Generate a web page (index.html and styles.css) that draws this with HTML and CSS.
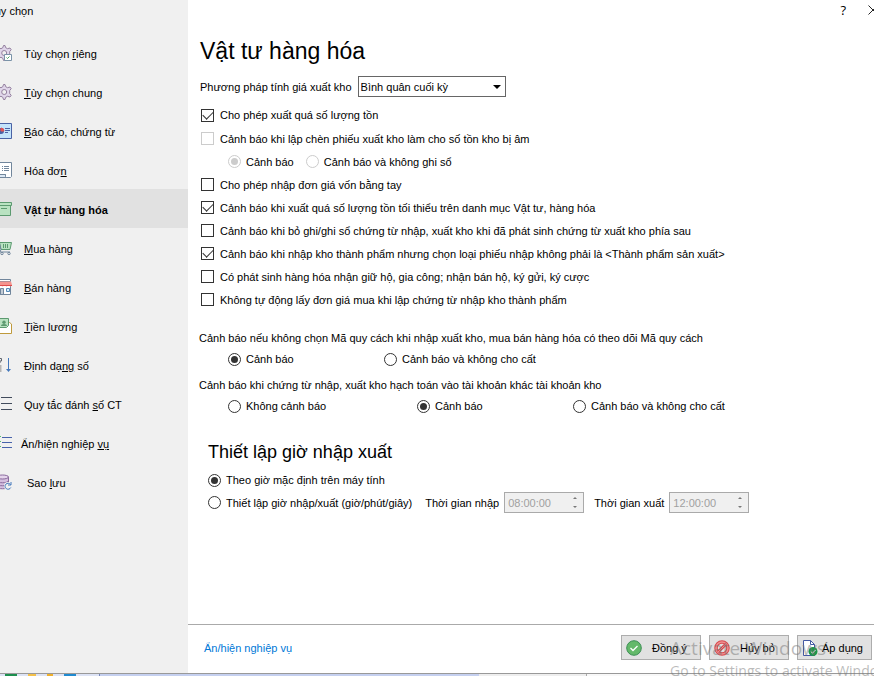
FILE: index.html
```html
<!DOCTYPE html>
<html lang="vi">
<head>
    <meta charset="UTF-8">
    <meta name="viewport" content="width=device-width, initial-scale=1.0">
    <title>Tùy chọn</title>
    <link rel="stylesheet" href="styles.css">
</head>
<body>
    <div class="dialog">
        <nav class="sidebar">
            <div class="title">Tùy chọn</div>
            <ul class="menu">
                <li><a href="#">
                    <svg width="16" height="16" viewBox="0 0 16 16" fill="none">
                        <path d="M7.500.5h1.500l.7 2.200 1.800 1L14 3l1.200 1.700L13.700 6.500v3l1.500 1.800L14 13l-2.500-.7-1.800 1-.7 2.200H7.500l-.7-2.200-1.800-1-2.500.7-1.200-1.700 1.500-1.800v-3L1.300 4.700 2.500 3 5 3.700l1.800-1z" fill="#e0d6ea" stroke="#94809f"/>
                        <circle cx="8.200" cy="8" r="2.500" fill="#f0f0f0" stroke="#94809f"/>
                        <path d="M8.500 9.500h7v6h-7z" fill="#fff" stroke="#7a93a8"/>
                        <path d="M10.500 12.500l1 1 2-2" stroke="#4aa564"/>
                    </svg>
                    <span>Tùy chọn <u>r</u>iêng</span></a></li>
                <li><a href="#">
                    <svg width="16" height="16" viewBox="0 0 16 16" fill="none">
                        <path d="M7.500.5h1.500l.7 2.200 1.800 1L14 3l1.200 1.700L13.700 6.500v3l1.500 1.800L14 13l-2.500-.7-1.800 1-.7 2.200H7.500l-.7-2.200-1.800-1-2.500.7-1.200-1.700 1.500-1.800v-3L1.300 4.700 2.500 3 5 3.700l1.800-1z" fill="#e0d6ea" stroke="#94809f"/>
                        <circle cx="8.200" cy="8" r="2.500" fill="#f0f0f0" stroke="#94809f"/>
                    </svg>
                    <span><u>T</u>ùy chọn chung</span></a></li>
                <li><a href="#">
                    <svg width="16" height="16" viewBox="0 0 16 16" fill="none">
                        <path d="M.5.5h15v15H.5z" fill="#c4e4fb" stroke="#4a62a5"/>
                        <circle cx="5" cy="8" r="3" fill="#4a62a5"/>
                        <path d="M5 8V5a3 3 0 0 1 3 3z" fill="#e05555" stroke="#e05555"/>
                        <path d="M9 5.500h5M9 7.500h5M9 9.500h3" stroke="#4a62a5"/>
                    </svg>
                    <span><u>B</u>áo cáo, chứng từ</span></a></li>
                <li><a href="#">
                    <svg width="16" height="16" viewBox="0 0 16 16" fill="none">
                        <path d="M3.500.5h12v14l-1 1h-4l-1-1v-2h-6z" fill="#fff" stroke="#71869c"/>
                        <path d="M.5 12.500h9v2l1 1H2l-1.500-1z" fill="#dce8f4" stroke="#71869c"/>
                        <path d="M6 4.500h1M8 4.500h5M6 6.500h1M8 6.500h5M6 8.500h1M8 8.500h5" stroke="#71869c"/>
                    </svg>
                    <span>Hóa đơ<u>n</u></span></a></li>
                <li><a href="#" class="active">
                    <svg width="16" height="16" viewBox="0 0 16 16" fill="none">
                        <path d="M1.500 4.500h13v10h-13zM.5 1.500h15v3H.5z" fill="#b9e2c1" stroke="#5c9a70"/>
                        <path d="M5 7.500h6" stroke="#5c9a70"/>
                    </svg>
                    <span>Vật <u>t</u>ư hàng hóa</span></a></li>
                <li><a href="#">
                    <svg width="16" height="16" viewBox="0 0 16 16" fill="none">
                        <path d="M3.500 2.500h12l-1.500 7H5z" fill="#b9e2c1" stroke="#5c9a70"/>
                        <path d="M7.500 4v4M9.500 4v4M11.500 4v4" stroke="#5c9a70"/>
                        <path d="M0 1.500h3l2 8-1 2.500h10" stroke="#71869c"/>
                        <circle cx="6" cy="13.500" r="1.200" stroke="#71869c"/>
                        <circle cx="13" cy="13.500" r="1.200" stroke="#71869c"/>
                    </svg>
                    <span><u>M</u>ua hàng</span></a></li>
                <li><a href="#">
                    <svg width="16" height="16" viewBox="0 0 16 16" fill="none">
                        <path d="M1.500 6.500h13v9h-13zM3.500.5h11v2h-11z" fill="#fff" stroke="#71869c"/>
                        <path d="M1 2.500h14l1 3.500-1.500 1.500-2-1-2 1-2-1-2 1-2-1-2 1L0 6z" fill="#f4948f"/>
                        <path d="M0 6.500h16" stroke="#df4b4b"/>
                        <path d="M4.500 9.500h3v6h-3z" fill="#c3ccd6" stroke="#71869c"/>
                        <path d="M10.500 9.500h3v3h-3z" fill="#d8effb" stroke="#5589b8"/>
                    </svg>
                    <span><u>B</u>án hàng</span></a></li>
                <li><a href="#">
                    <svg width="16" height="16" viewBox="0 0 16 16" fill="none">
                        <path d="M.5 4.500h13l2 1.500v9.500H.5z" fill="#fff" stroke="#bf9a3c"/>
                        <path d="M2.500.5h10v7l-2 2h-8z" fill="#b9e2c1" stroke="#5c9a70"/>
                        <circle cx="8" cy="4.200" r="1.700" fill="#5c9a70"/>
                        <path d="M5 8a3 2 0 0 1 6 0z" fill="#5c9a70"/>
                    </svg>
                    <span><u>T</u>iền lương</span></a></li>
                <li><a href="#">
                    <svg width="16" height="16" viewBox="0 0 16 16" fill="none">
                        <path d="M3 1.500h2.500v2.500H4v2" stroke="#5f656e"/>
                        <path d="M4.500 8v7" stroke="#b5b5b5" stroke-width="2"/>
                        <path d="M12.500 1v13" stroke="#4478bc"/>
                        <path d="M10 12h5l-2.500 3z" fill="#4478bc"/>
                    </svg>
                    <span>Định dạ<u>ng</u> số</span></a></li>
                <li><a href="#">
                    <svg width="16" height="16" viewBox="0 0 16 16" fill="none">
                        <path d="M5 1.500h11M5 7.500h11M5 13.500h11" stroke="#414b5c"/>
                    </svg>
                    <span>Quy tắc đánh <u>s</u>ố CT</span></a></li>
                <li><a href="#" class="wide">
                    <svg width="16" height="16" viewBox="0 0 16 16" fill="none">
                        <path d="M6 2.500h10M6 7.500h10M6 12.500h10" stroke="#4863ab"/>
                        <path d="M1 2l1.500 1.500L5 1M1 7l1.500 1.500L5 6M1 12l1.500 1.500L5 11" stroke="#57c06e"/>
                    </svg>
                    <span>Ẩn/hiện nghiệp <u>vụ</u></span></a></li>
                <li><a href="#" class="narrow">
                    <svg width="16" height="16" viewBox="0 0 16 16" fill="none">
                        <path d="M.5 3v9.500c0 3 12 3 12 0V3z" fill="#d4bedf" stroke="#8a6a9d"/>
                        <ellipse cx="6.500" cy="3" rx="6" ry="2" fill="#e5d5ec" stroke="#8a6a9d"/>
                        <path d="M.5 6.500c0 3 12 3 12 0M.5 9.500c0 3 12 3 12 0" stroke="#8a6a9d"/>
                        <circle cx="12" cy="12" r="4" fill="#f0f0f0"/>
                        <path d="M14.500 10.500a3 3 0 1 0 .3 3M15 8v3h-3" stroke="#4478bc"/>
                    </svg>
                    <span>Sao <u>l</u>ưu</span></a></li>
            </ul>
        </nav>

        <main class="content">
            <div class="window-buttons">
                <button type="button" aria-label="Help">?</button>
                <button type="button" aria-label="Close">
                    <svg width="10" height="10" viewBox="0 0 10 10"><path d="M.5.5l9 9M9.500.5l-9 9" stroke="#222"/></svg>
                </button>
            </div>

            <form class="options">
                <h1>Vật tư hàng hóa</h1>
                <div class="method">
                    <label for="method">Phương pháp tính giá xuất kho</label>
                    <div class="select">
                        <select id="method">
                            <option>Bình quân cuối kỳ</option>
                        </select>
                    </div>
                </div>

                <div class="checks">
                    <label><input type="checkbox" checked>Cho phép xuất quá số lượng tồn</label>
                    <label><input type="checkbox" disabled>Cảnh báo khi lập chèn phiếu xuất kho làm cho số tồn kho bị âm</label>
                    <div class="sub">
                        <label><input type="radio" name="negative" checked disabled>Cảnh báo</label>
                        <label><input type="radio" name="negative" disabled>Cảnh báo và không ghi sổ</label>
                    </div>
                    <label><input type="checkbox">Cho phép nhập đơn giá vốn bằng tay</label>
                    <label><input type="checkbox" checked>Cảnh báo khi xuất quá số lượng tồn tối thiểu trên danh mục Vật tư, hàng hóa</label>
                    <label><input type="checkbox">Cảnh báo khi bỏ ghi/ghi sổ chứng từ nhập, xuất kho khi đã phát sinh chứng từ xuất kho phía sau</label>
                    <label><input type="checkbox" checked>Cảnh báo khi nhập kho thành phẩm nhưng chọn loại phiếu nhập không phải là &lt;Thành phẩm sản xuất&gt;</label>
                    <label><input type="checkbox">Có phát sinh hàng hóa nhận giữ hộ, gia công; nhận bán hộ, ký gửi, ký cược</label>
                    <label><input type="checkbox">Không tự động lấy đơn giá mua khi lập chứng từ nhập kho thành phẩm</label>
                </div>

                <fieldset class="group">
                    <legend>Cảnh báo nếu không chọn Mã quy cách khi nhập xuất kho, mua bán hàng hóa có theo dõi Mã quy cách</legend>
                    <div class="choices two">
                        <label><input type="radio" name="spec" checked>Cảnh báo</label>
                        <label><input type="radio" name="spec">Cảnh báo và không cho cất</label>
                    </div>
                </fieldset>
                <fieldset class="group">
                    <legend>Cảnh báo khi chứng từ nhập, xuất kho hạch toán vào tài khoản khác tài khoản kho</legend>
                    <div class="choices three">
                        <label><input type="radio" name="account">Không cảnh báo</label>
                        <label><input type="radio" name="account" checked>Cảnh báo</label>
                        <label><input type="radio" name="account">Cảnh báo và không cho cất</label>
                    </div>
                </fieldset>

                <section class="time">
                    <h2>Thiết lập giờ nhập xuất</h2>
                    <label><input type="radio" name="time" checked>Theo giờ mặc định trên máy tính</label>
                    <div class="time-row">
                        <label><input type="radio" name="time">Thiết lập giờ nhập/xuất (giờ/phút/giây)</label>
                        <label for="timeIn">Thời gian nhập</label>
                        <div class="spin"><input type="text" id="timeIn" value="08:00:00" disabled></div>
                        <label for="timeOut">Thời gian xuất</label>
                        <div class="spin"><input type="text" id="timeOut" value="12:00:00" disabled></div>
                    </div>
                </section>
            </form>

            <footer class="footer">
                <a href="#">Ẩn/hiện nghiệp vụ</a>
                <div class="actions">
                    <button type="button">
                        <svg width="16" height="16" viewBox="0 0 16 16" fill="none">
                            <circle cx="8" cy="8" r="7.300" fill="#64b96a" stroke="#3c8f55"/>
                            <path d="M4.500 8l2.500 2.500 4.500-4.500" stroke="#fff" stroke-width="1.300"/>
                        </svg>
                        <span>Đồng ý</span>
                    </button>
                    <button type="button">
                        <svg width="16" height="16" viewBox="0 0 16 16" fill="none">
                            <circle cx="8" cy="8" r="6" stroke="#d9484c" stroke-width="3.500"/>
                            <circle cx="8" cy="8" r="6" stroke="#ee8f90" stroke-width="1.500"/>
                            <path d="M4 12l8-8" stroke="#d9484c" stroke-width="3"/>
                            <path d="M4 12l8-8" stroke="#ee8f90"/>
                        </svg>
                        <span>Hủy bỏ</span>
                    </button>
                    <button type="button">
                        <svg width="16" height="16" viewBox="0 0 16 16" fill="none">
                            <path d="M1.500.5h7l4 4v11h-11z" fill="#fff" stroke="#4459a3"/>
                            <path d="M8.500.5v4h4" stroke="#4459a3"/>
                            <circle cx="11" cy="11.500" r="4.500" fill="#1d9447"/>
                            <path d="M8.800 11.500l1.700 1.700 3-3.200" stroke="#fff"/>
                        </svg>
                        <span>Áp dụng</span>
                    </button>
                </div>
            </footer>
        </main>
    </div>
    <div class="taskbar"><i></i><i></i><i></i><i></i></div>
    <div class="watermark">
        <div class="watermark-title">Activate Windows</div>
        <div>Go to Settings to activate Windows.</div>
    </div>
</body>
</html>
```
FILE: styles.css
```css
* {
    box-sizing: border-box;
}
body {
    margin: 0;
    height: 100vh;
    display: flex;
    flex-direction: column;
    overflow: hidden;
    position: relative;
    font-family: "Liberation Sans", Arial, sans-serif;
    font-size: 11px;
    line-height: 16px;
    color: #000;
    background: #fff;
}
.dialog {
    flex: 1;
    display: flex;
    min-height: 0;
    border-bottom: 1px solid #999;
}

/* left menu */
.sidebar {
    width: 188px;
    flex: none;
    overflow: hidden;
    background: #f0f0f0;
}
.title {
    height: 33px;
    padding-top: 3px;
    margin-left: -12px;
}
.menu {
    list-style: none;
    margin: 0;
    padding: 0;
}
.menu a {
    display: flex;
    align-items: center;
    gap: 12px;
    height: 39px;
    margin-left: -4px;
    padding-top: 2px;
    color: #000;
    text-decoration: none;
    white-space: nowrap;
}
.menu a.active {
    background: #e1e1e1;
    font-weight: bold;
}
.menu a.wide {
    gap: 9px;
}
.menu a.narrow {
    gap: 15px;
}
.menu svg {
    margin-top: -2px;
}
svg {
    flex: none;
}

/* right side */
.content {
    flex: 1;
    min-width: 0;
    display: flex;
    flex-direction: column;
}
.window-buttons {
    display: flex;
    justify-content: flex-end;
    gap: 22px;
    height: 20px;
    margin-right: -4px;
}
.window-buttons button {
    padding: 0;
    border: none;
    background: none;
    font-family: "Open Sans", sans-serif;
    font-size: 13px;
}
.options {
    flex: 1;
    padding: 14px 12px 0;
    white-space: nowrap;
}
h1 {
    margin: 0 0 8px;
    font-size: 23px;
    font-weight: normal;
    line-height: 34px;
}
.method {
    display: flex;
    align-items: center;
    gap: 6px;
    margin-bottom: 6px;
}
.select {
    position: relative;
    width: 148px;
}
.select::after {
    content: "";
    position: absolute;
    right: 5px;
    top: 9px;
    border: 4px solid transparent;
    border-top-color: #000;
    border-bottom: none;
    pointer-events: none;
}
select {
    appearance: none;
    width: 100%;
    height: 21px;
    padding: 0 2px;
    border: 1px solid #666;
    border-radius: 0;
    background: #fff;
    color: #000;
    font: inherit;
}
.options label {
    display: flex;
    align-items: center;
}
.checks {
    padding-left: 1px;
}
.checks > * {
    height: 23px;
}
.checks > label:first-child {
    height: 24px;
}
input[type="checkbox"],
input[type="radio"] {
    appearance: none;
    display: grid;
    place-items: center;
    flex: none;
    width: 13px;
    height: 13px;
    margin: 0 6px 0 0;
    border: 1px solid #333;
    background: #fff;
}
input[type="radio"] {
    margin-right: 5px;
    border-radius: 50%;
}
input[type="checkbox"]:checked::before {
    content: "";
    width: 9px;
    height: 5px;
    margin-top: -3px;
    border: solid #333;
    border-width: 0 0 1px 1px;
    transform: rotate(-45deg);
}
input[type="radio"]:checked::before {
    content: "";
    width: 7px;
    height: 7px;
    border-radius: 50%;
    background: #333;
}
input:disabled {
    border-color: #ccc !important;
}
input[type="radio"]:disabled::before {
    background: #ccc;
}
.sub {
    display: flex;
    gap: 12px;
    padding-left: 27px;
}
.group {
    margin: 0;
    padding: 0;
    border: none;
}
.checks + .group {
    margin-top: 19px;
}
.group + .group {
    margin-top: 5px;
}
legend {
    padding: 0;
    margin-left: -1px;
}
.choices {
    display: grid;
    height: 26px;
    padding-left: 28px;
}
.two {
    grid-template-columns: 156px 1fr;
}
.three {
    grid-template-columns: 189px 156px 1fr;
}
.time {
    padding-left: 8px;
    margin-top: 21px;
}
h2 {
    margin: 0 0 4px;
    font-size: 18px;
    font-weight: normal;
    line-height: 24px;
}
.time > label {
    height: 24px;
}
.time-row {
    display: flex;
    align-items: center;
}
.time-row label:first-child {
    margin-right: 13px;
}
.spin {
    position: relative;
    width: 80px;
    margin: 0 10px 0 5px;
}
.spin input {
    display: block;
    width: 100%;
    height: 21px;
    padding: 0 3px;
    border: 1px solid #aaa !important;
    background: #f0f0f0;
    color: #a0a0a0;
    font: inherit;
}
.spin::before,
.spin::after {
    content: "";
    position: absolute;
    right: 7px;
    top: 5px;
    border: 2px solid transparent;
    border-top: none;
    border-bottom-color: #777;
}
.spin::after {
    top: 14px;
    border-top: 2px solid #777;
    border-bottom: none;
}

/* bottom bar */
.footer {
    display: flex;
    align-items: center;
    justify-content: space-between;
    height: 49px;
    padding: 0 2px 3px 16px;
    border-top: 1px solid #aaa;
}
.footer a {
    color: #0078d7;
    text-decoration: none;
}
.actions {
    display: flex;
    gap: 8px;
}
.actions button {
    display: flex;
    align-items: center;
    gap: 10px;
    width: 80px;
    height: 25px;
    padding: 0 4px;
    border: 1px solid #adadad;
    background: #e1e1e1;
    color: #000;
    font: inherit;
}
.actions button:last-child {
    width: 75px;
    gap: 4px;
}
.taskbar {
    display: flex;
    gap: 11px;
    height: 2px;
    padding-left: 5px;
    background: linear-gradient(to right, #dde3f5 99px, #7788bb 99px, #7788bb 100px, #c5d0f0 100px, #c5d0f0 479px, #eee 479px, #eee 586px, #aaa 586px, #aaa 587px, #f8f8f8 587px);
}
.taskbar i {
    width: 12px;
    background: #1d8f4e;
}
.taskbar i:nth-child(2) {
    width: 8px;
    background: #f3c04a;
}
.taskbar i:nth-child(3) {
    width: 6px;
    background: #efb02c;
}
.taskbar i:nth-child(4) {
    background: #1f8ad0;
}
.watermark {
    position: absolute;
    left: 670px;
    top: 635px;
    color: rgba(120, 120, 120, 0.5);
    font-family: "Open Sans", sans-serif;
    font-size: 14px;
    line-height: 20px;
    white-space: nowrap;
    pointer-events: none;
}
.watermark-title {
    font-size: 19px;
    line-height: 26px;
}
```
